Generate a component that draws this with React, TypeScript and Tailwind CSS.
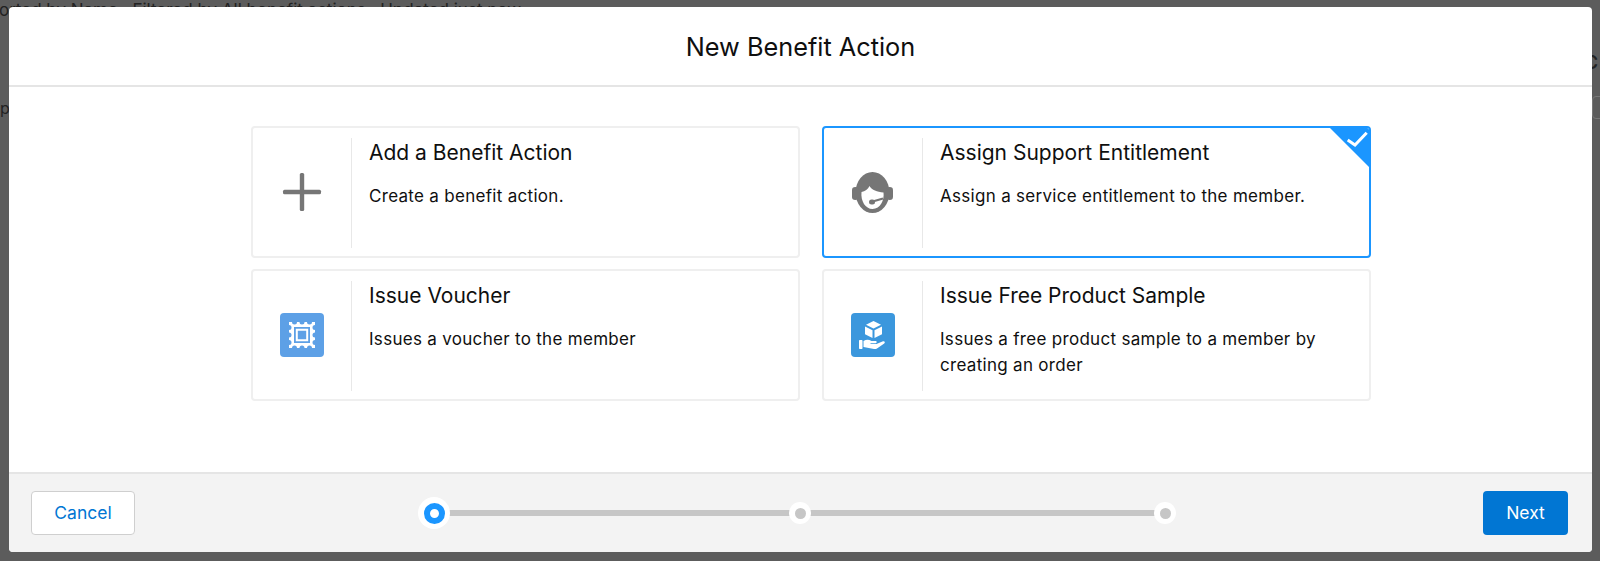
import React from "react";

const font = { fontFamily: "Inter, 'Liberation Sans', sans-serif" };

function Headset() {
  return (
    <svg width="41" height="41" viewBox="0 0 41 41">
      <ellipse cx="20.500" cy="20.500" rx="17" ry="20.500" fill="#767676" />
      <rect x="0" y="15" width="6.500" height="13" rx="3.200" fill="#767676" />
      <rect x="34.500" y="15" width="6.500" height="13" rx="3.200" fill="#767676" />
      <path
        fill="#fff"
        d="M9.500 20C13 19.500 16 17 17.500 14 20 18 25 20 31.500 20.500 32.500 28 28.500 37 20.500 37 13.500 37 8.500 29 9.500 20z"
      />
      <path d="M19 30L31 26.500" stroke="#767676" strokeWidth="2.200" fill="none" />
      <rect x="17" y="27.500" width="6" height="5" rx="2.500" fill="#767676" />
    </svg>
  );
}

function Stamp() {
  return (
    <svg width="44" height="44" viewBox="0 0 44 44">
      <rect width="44" height="44" rx="4" fill="#5da0e6" />
      <path
        fill="#fff"
        fillRule="evenodd"
        d="M9 9h3a2.500 2.500 0 0 0 5 0h2.500a2.500 2.500 0 0 0 5 0H27a2.500 2.500 0 0 0 5 0h3v3a2.500 2.500 0 0 0 0 5v2.500a2.500 2.500 0 0 0 0 5V27a2.500 2.500 0 0 0 0 5v3h-3a2.500 2.500 0 0 0-5 0h-2.500a2.500 2.500 0 0 0-5 0H17a2.500 2.500 0 0 0-5 0H9v-3a2.500 2.500 0 0 0 0-5v-2.500a2.500 2.500 0 0 0 0-5V17a2.500 2.500 0 0 0 0-5V9zM14 14v16h16V14H14z"
      />
      <path fill="#fff" fillRule="evenodd" d="M15.800 15.800h12.400v12.400H15.800V15.800zM17.800 17.800v8.400h8.400v-8.400h-8.400z" />
    </svg>
  );
}

function Sample() {
  return (
    <svg width="44" height="44" viewBox="0 0 44 44">
      <rect width="44" height="44" rx="4" fill="#3b97dd" />
      <path fill="#fff" d="M22.500 8l7.500 3.800-7.500 3.800-7.500-3.800z" />
      <path fill="#fff" d="M14 13.500l7.500 3.800v7.700L14 21.200z" />
      <path fill="#fff" d="M31 13.500v7.700L23.500 25v-7.700z" />
      <rect x="8" y="27" width="3.500" height="9" rx="0.800" fill="#fff" />
      <path
        fill="#fff"
        d="M12.500 28c3-1.800 5.500-1.500 8 0h4.200c1.300 0 1.500 2.200 0 2.200H19.500v.8h6l6.500-2.700c1.700-.5 2.500 1.200 1.200 2.100L26 35.500c-1 .5-2 .6-3 .4l-10.500-1.800z"
      />
    </svg>
  );
}

function Plus() {
  return (
    <svg width="44" height="44" viewBox="0 0 44 44">
      <rect x="19.800" y="3" width="4.400" height="38" rx="1.500" fill="#767676" />
      <rect x="3" y="19.800" width="38" height="4.400" rx="1.500" fill="#767676" />
    </svg>
  );
}

function Card({
  icon,
  title,
  text,
  selected,
}: {
  icon: React.ReactNode;
  title: string;
  text: React.ReactNode;
  selected?: boolean;
}) {
  return (
    <div
      className={
        "relative flex h-[132px] overflow-hidden rounded-[4px] bg-white pb-[8px] pt-[10px] " +
        (selected ? "border-2 border-[#1b96ff]" : "border-2 border-[#efefef]")
      }
    >
      <div className="flex w-[99px] shrink-0 items-center justify-center border-r border-[#e8e8e8] pb-[2px] pr-[1px]">
        {icon}
      </div>
      <div className="pl-[17px] pr-[40px] pt-[2px]">
        <div className="text-[21px] leading-[26px] text-[#0f0f0f]">{title}</div>
        <div className="mt-[17px] text-[17px] leading-[26px] tracking-[0.3px] text-[#0f0f0f]">{text}</div>
      </div>
      {selected && (
        <svg className="absolute right-0 top-0" width="42" height="42" viewBox="0 0 42 42">
          <path d="M3 0H42V39z" fill="#1b96ff" />
          <path d="M20.700 12L28 17L39.700 4.700" stroke="#fff" strokeWidth="3" fill="none" />
        </svg>
      )}
    </div>
  );
}

function Dot({ active }: { active?: boolean }) {
  return active ? (
    <div className="z-10 flex h-[32px] w-[32px] shrink-0 items-center justify-center rounded-full bg-white">
      <div className="h-[21px] w-[21px] rounded-full border-[6px] border-[#1b96ff] bg-white" />
    </div>
  ) : (
    <div className="z-10 flex h-[22px] w-[22px] shrink-0 items-center justify-center rounded-full bg-white">
      <div className="h-[11px] w-[11px] rounded-full bg-[#c6c6c6]" />
    </div>
  );
}

export default function App() {
  return (
    <div
      className="relative flex h-[561px] w-[1600px] flex-col overflow-hidden bg-[#5c5c5c] pb-[9px] pl-[9px] pr-[8px] pt-[7px]"
      style={font}
    >
      <div className="absolute left-[-1px] top-0 whitespace-nowrap text-[17px] leading-[20px] text-[#222]">
        orted by Name · Filtered by All benefit actions · Updated just now
      </div>
      <div className="absolute left-0 top-[98px] text-[16px] leading-[20px] text-[#222]">pu</div>
      <div className="absolute right-[2px] top-[53px] text-[18px] font-semibold leading-[20px] text-[#222]">C</div>
      <div className="absolute right-[-12px] top-[96px] h-[23px] w-[20px] rounded-[4px] border border-[#777]" />
      <div className="relative flex min-h-0 flex-1 flex-col overflow-hidden rounded-[4px] bg-white">
        <div className="flex h-[80px] shrink-0 items-center justify-center border-b-2 border-[#e5e5e5] pt-[1px] text-[25.300px] leading-[30px] text-[#0f0f0f]">
          New Benefit Action
        </div>
        <div className="flex-1 pl-[242px] pr-[221px] pt-[39px]">
          <div className="grid grid-cols-2 gap-x-[22px] gap-y-[11px]">
            <Card icon={<Plus />} title="Add a Benefit Action" text="Create a benefit action." />
            <Card selected icon={<Headset />} title="Assign Support Entitlement" text="Assign a service entitlement to the member." />
            <Card icon={<Stamp />} title="Issue Voucher" text="Issues a voucher to the member" />
            <Card
              icon={<Sample />}
              title="Issue Free Product Sample"
              text={
                <>
                  Issues a free product sample to a member by
                  <br />
                  creating an order
                </>
              }
            />
          </div>
        </div>
        <div className="flex h-[80px] shrink-0 items-center border-t-2 border-[#e5e5e5] bg-[#f3f3f3] pl-[22px] pr-[24px]">
          <button className="h-[44px] w-[104px] shrink-0 rounded-[4px] border-[1.500px] border-[#cfcfcf] bg-white text-[17.500px] text-[#0176d3]">
            Cancel
          </button>
          <div className="ml-[283px] flex w-[758px] items-center">
            <Dot active />
            <div className="mx-[-4px] h-[6px] w-[347px] shrink-0 bg-[#c6c6c6]" />
            <Dot />
            <div className="mx-[-4px] h-[6px] w-[351px] shrink-0 bg-[#c6c6c6]" />
            <Dot />
          </div>
          <button className="ml-auto h-[44px] w-[85px] shrink-0 rounded-[4px] bg-[#0176d3] text-[17.500px] text-white">
            Next
          </button>
        </div>
      </div>
    </div>
  );
}
